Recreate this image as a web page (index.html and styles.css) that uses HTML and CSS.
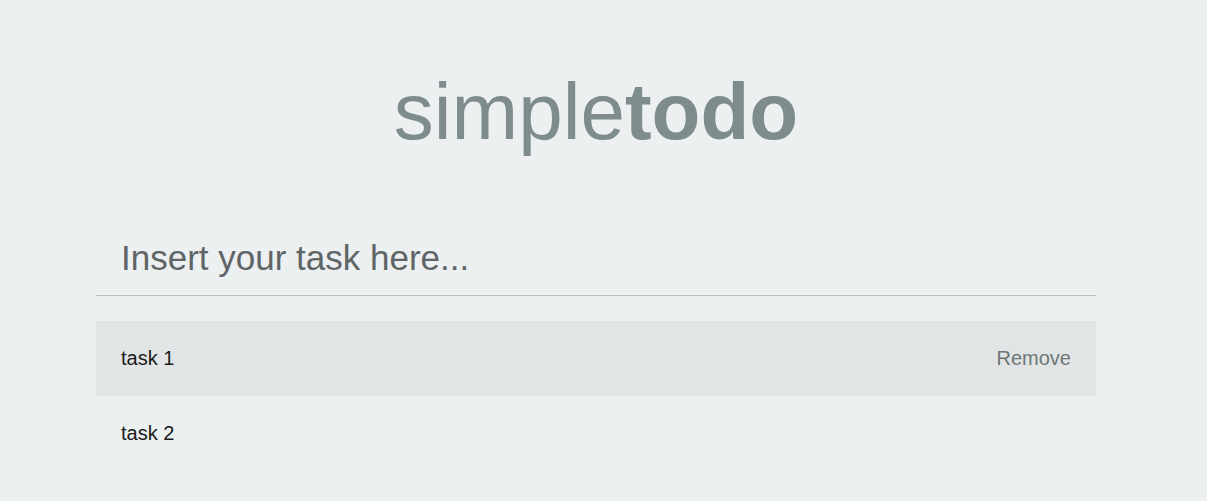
FILE: index.html
```html
<!DOCTYPE html>
<html lang="en">
<head>
<meta charset="utf-8">
<title>simpletodo</title>
<link rel="stylesheet" href="styles.css">
</head>
<body>
<div class="page">
  <main class="container">
    <h1 class="title">simple<strong>todo</strong></h1>
    <form class="task-form">
      <input class="task-input" type="text" placeholder="Insert your task here...">
    </form>
    <ul class="task-list">
      <li class="task task-hover"><span class="task-name">task 1</span><a class="task-remove">Remove</a></li>
      <li class="task"><span class="task-name">task 2</span></li>
    </ul>
  </main>
</div>
</body>
</html>
```

FILE: styles.css
```css
html, body {
  margin: 0;
  padding: 0;
  background: #ecf0f1;
  font-family: "Liberation Sans", Arial, sans-serif;
}

.page {
  width: 1192px;
}

.container {
  width: 1000px;
  margin: 0 auto;
}

.title {
  margin: 66px 0 64px;
  text-align: center;
  font-size: 80px;
  font-weight: normal;
  color: #7f8c8d;
  line-height: 92px;
}

.title strong {
  font-weight: bold;
}

.task-form {
  margin: 0;
}

.task-input {
  display: block;
  width: 100%;
  box-sizing: border-box;
  margin: 0;
  padding: 16px 25px 17px;
  border: none;
  border-bottom: 1px solid #bdbdbd;
  background: transparent;
  font-family: "Liberation Sans", Arial, sans-serif;
  font-size: 35px;
  line-height: 40px;
  color: #333;
  outline: none;
}

.task-input::placeholder {
  color: #5f6566;
  opacity: 1;
}

.task-list {
  list-style: none;
  margin: 25px 0 0;
  padding: 0;
}

.task {
  display: flex;
  justify-content: space-between;
  align-items: center;
  padding: 26px 25px;
  font-size: 20px;
  line-height: 23px;
  color: #1a1a1a;
}

.task-hover {
  background: #e2e5e6;
}

.task-remove {
  color: #6e7677;
  cursor: pointer;
}
```
